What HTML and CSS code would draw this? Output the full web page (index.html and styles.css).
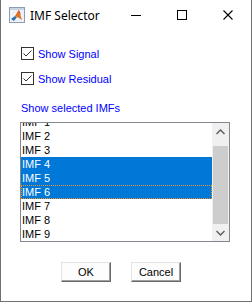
FILE: index.html
```html
<!DOCTYPE html>
<html>
<head>
<meta charset="utf-8">
<link rel="stylesheet" href="styles.css">
</head>
<body>
<div class="window">
  <header class="titlebar">
    <svg class="app-icon" width="16" height="16" viewBox="0 0 16 16">
      <rect x="0.5" y="0.5" width="15" height="15" fill="#eef2f7" stroke="#8c9db3"/>
      <rect x="1" y="1" width="14" height="2" fill="#c9d4e2"/>
      <polygon points="2,12 6,9 8,10 5,14" fill="#2d6fb5"/>
      <polygon points="6,9 9,4 11,7 13,13 10,11 8,10" fill="#e3701e"/>
      <polygon points="9,4 10,3 12,8 11,7" fill="#b8301a"/>
    </svg>
    <span class="title">IMF Selector</span>
    <div class="caption-buttons">
      <span class="cap-btn"><svg width="10" height="10" viewBox="0 0 10 10"><line x1="0" y1="5.5" x2="10" y2="5.5" stroke="#000" stroke-width="1"/></svg></span>
      <span class="cap-btn"><svg width="10" height="10" viewBox="0 0 10 10"><rect x="0.5" y="0.5" width="9" height="9" fill="none" stroke="#000" stroke-width="1"/></svg></span>
      <span class="cap-btn"><svg width="10" height="10" viewBox="0 0 10 10"><path d="M0.5 0.5 L9.5 9.5 M9.5 0.5 L0.5 9.5" stroke="#000" stroke-width="1.1" fill="none"/></svg></span>
    </div>
  </header>
  <main class="content">
    <div class="check-row">
      <svg class="checkbox" width="13" height="13" viewBox="0 0 13 13"><rect x="0.5" y="0.5" width="12" height="12" fill="#fff" stroke="#333"/><polyline points="2.5,6.5 5,9 10.5,3.5" fill="none" stroke="#333" stroke-width="1"/></svg>
      <span class="check-label">Show Signal</span>
    </div>
    <div class="check-row">
      <svg class="checkbox" width="13" height="13" viewBox="0 0 13 13"><rect x="0.5" y="0.5" width="12" height="12" fill="#fff" stroke="#333"/><polyline points="2.5,6.5 5,9 10.5,3.5" fill="none" stroke="#333" stroke-width="1"/></svg>
      <span class="check-label">Show Residual</span>
    </div>
    <div class="section-label">Show selected IMFs</div>
    <div class="listbox">
      <div class="list-viewport">
        <ul class="list-items">
          <li>IMF 1</li>
          <li>IMF 2</li>
          <li>IMF 3</li>
          <li class="selected">IMF 4</li>
          <li class="selected">IMF 5</li>
          <li class="selected focused">IMF 6</li>
          <li>IMF 7</li>
          <li>IMF 8</li>
          <li>IMF 9</li>
        </ul>
      </div>
      <div class="scrollbar">
        <div class="sb-arrow"><svg width="9" height="6" viewBox="0 0 9 6"><polyline points="0.5,5 4.5,1 8.5,5" fill="none" stroke="#606060" stroke-width="1.5"/></svg></div>
        <div class="sb-track"><div class="sb-thumb"></div></div>
        <div class="sb-arrow"><svg width="9" height="6" viewBox="0 0 9 6"><polyline points="0.5,1 4.5,5 8.5,1" fill="none" stroke="#606060" stroke-width="1.5"/></svg></div>
      </div>
    </div>
    <div class="button-row">
      <button class="btn">OK</button>
      <button class="btn">Cancel</button>
    </div>
  </main>
</div>
</body>
</html>
```
FILE: styles.css
```css
* { box-sizing: border-box; }
html, body { margin: 0; padding: 0; background: #fff; }
.window {
  width: 252px;
  height: 302px;
  border: 1px solid #707070;
  border-top: none;
  background: #fff;
  display: flex;
  flex-direction: column;
  font-family: "Liberation Sans", Arial, sans-serif;
}
.titlebar {
  height: 31px;
  display: flex;
  align-items: center;
  flex: none;
}
.app-icon { margin-left: 8px; margin-top: -1px; flex: none; }
.title {
  font-family: "Noto Sans", sans-serif;
  font-size: 12px;
  color: #000;
  margin-left: 5px;
  flex: 1;
  margin-top: -1px;
}
.caption-buttons { display: flex; height: 30px; align-self: flex-start; }
.cap-btn {
  width: 46px;
  height: 30px;
  display: flex;
  align-items: center;
  justify-content: center;
}
.cap-btn svg { display: block; }
.content {
  flex: 1;
  display: flex;
  flex-direction: column;
  padding: 16px 21px 0 19px;
}
.check-row {
  display: flex;
  align-items: center;
  height: 13px;
  margin-left: 1px;
  margin-bottom: 12px;
}
.checkbox { display: block; flex: none; }
.check-label {
  font-size: 11px;
  line-height: 13px;
  color: #0000ff;
  margin-left: 4px;
  margin-top: 1px;
}
.section-label {
  font-size: 11px;
  line-height: 13px;
  color: #0000ff;
  margin-top: 5px;
  margin-left: 1px;
}
.listbox {
  margin-top: 7px;
  width: 210px;
  height: 120px;
  flex: none;
  border: 1px solid #828790;
  display: flex;
}
.list-viewport {
  flex: 1;
  overflow: hidden;
}
.list-items {
  list-style: none;
  margin: -8px 0 0 0;
  padding: 0;
}
.list-items li {
  height: 14px;
  font-size: 11px;
  line-height: 15px;
  padding-left: 1px;
  color: #000;
  white-space: nowrap;
}
.list-items li.selected { background: #0078d7; color: #fff; }
.list-items li.focused { outline: 1px dotted #f0902a; outline-offset: -1px; }
.scrollbar {
  width: 17px;
  flex: none;
  display: flex;
  flex-direction: column;
  background: #f0f0f0;
}
.sb-arrow {
  height: 17px;
  display: flex;
  align-items: center;
  justify-content: center;
  flex: none;
}
.sb-arrow svg { display: block; }
.sb-track {
  flex: 1;
  display: flex;
  flex-direction: column;
  justify-content: flex-end;
  padding: 0 1px;
}
.sb-thumb { height: 78px; background: #cdcdcd; }
.button-row {
  display: flex;
  gap: 20px;
  margin-top: 20px;
  margin-left: 41px;
}
.btn {
  width: 50px;
  height: 20px;
  padding: 0;
  font-family: "Liberation Sans", Arial, sans-serif;
  font-size: 11px;
  color: #000;
  background: #fdfdfd;
  border: 1px solid;
  border-color: #e3e3e3 #696969 #696969 #e3e3e3;
  box-shadow: inset -1px -1px 0 #a0a0a0;
}
```
